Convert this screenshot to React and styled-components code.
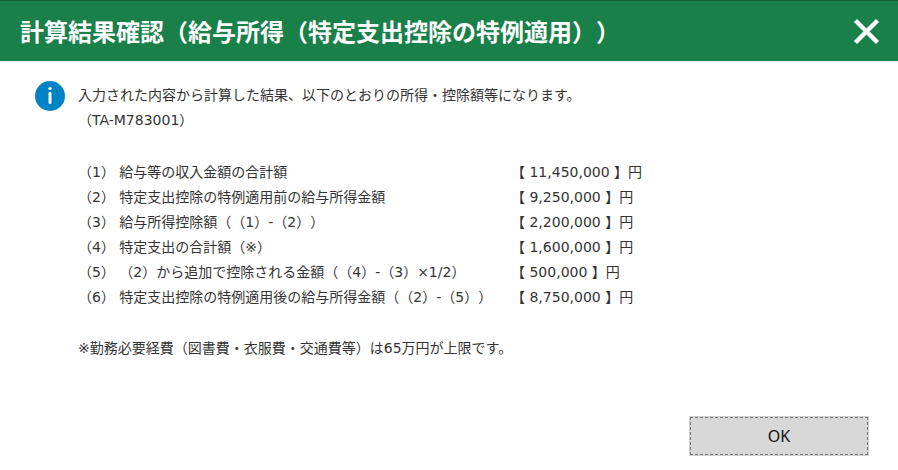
import styled, { createGlobalStyle } from 'styled-components';

const GlobalStyle = createGlobalStyle`
  *,
  *::before,
  *::after {
    box-sizing: border-box;
  }

  body {
    margin: 0;
    background: #ffffff;
    color: #333333;
    font-family: 'DejaVu Sans', 'Noto Sans CJK JP', sans-serif;
    font-size: 14px;
    line-height: 25px;
    text-spacing-trim: space-all;
  }
`;

const StyledHeader = styled.header`
  display: flex;
  align-items: center;
  justify-content: space-between;
  height: 61px;
  padding: 0 18px 0 20px;
  border-top: 1px solid #17603a;
  background: #1a804a;
`;

const StyledHeading = styled.h1`
  margin: 0;
  color: #ffffff;
  font-family: 'Noto Sans CJK JP', sans-serif;
  font-size: 24px;
  font-weight: 700;
  line-height: 36px;
`;

const StyledCloseButton = styled.button`
  display: flex;
  padding: 0;
  border: none;
  background: transparent;
  cursor: pointer;
`;

const StyledContent = styled.main`
  display: flex;
  align-items: flex-start;
  gap: 13px;
  padding: 20px 35px 0;
`;

const StyledIcon = styled.svg`
  flex: none;
  width: 30px;
  height: 30px;
`;

const StyledMessage = styled.div`
  flex: 1;
  padding-top: 2px;
`;

const StyledText = styled.p`
  margin: 0;
`;

const StyledTable = styled.table`
  margin: 27px 0 26px;
  border-collapse: collapse;
`;

const StyledLabel = styled.th`
  width: 433px;
  padding: 0;
  font-weight: 400;
  text-align: left;
`;

const StyledAmount = styled.td`
  padding: 0;
  white-space: nowrap;
`;

const StyledFooter = styled.footer`
  display: flex;
  justify-content: flex-end;
  padding: 55px 29px 14px;
`;

const StyledButton = styled.button`
  width: 180px;
  height: 40px;
  padding: 0;
  border: 1px solid #d0d0d0;
  outline: 1px dashed #777777;
  outline-offset: -2px;
  background: #d8d8d8;
  color: #111111;
  font-family: 'Noto Sans', sans-serif;
  font-size: 16px;
  cursor: pointer;
`;

const results = [
  { label: '（1） 給与等の収入金額の合計額', amount: '11,450,000' },
  { label: '（2） 特定支出控除の特例適用前の給与所得金額', amount: '9,250,000' },
  { label: '（3） 給与所得控除額（（1）-（2））', amount: '2,200,000' },
  { label: '（4） 特定支出の合計額（※）', amount: '1,600,000' },
  { label: '（5） （2）から追加で控除される金額（（4）-（3）×1/2）', amount: '500,000' },
  { label: '（6） 特定支出控除の特例適用後の給与所得金額（（2）-（5））', amount: '8,750,000' },
];

const App = () => (
  <div lang="ja">
    <GlobalStyle />
    <StyledHeader>
      <StyledHeading>計算結果確認（給与所得（特定支出控除の特例適用））</StyledHeading>
      <StyledCloseButton type="button" aria-label="閉じる">
        <svg width="27" height="27" viewBox="0 0 27 27" aria-hidden="true">
          <path d="M2.5 2.5 24.5 24.5M24.5 2.5 2.5 24.5" stroke="#ffffff" strokeWidth="4.5" />
        </svg>
      </StyledCloseButton>
    </StyledHeader>
    <StyledContent>
      <StyledIcon viewBox="0 0 30 30" aria-hidden="true">
        <circle cx="15" cy="15" r="15" fill="#0082c6" />
        <circle cx="15" cy="7.6" r="1.7" fill="#ffffff" />
        <path d="M15 12.3V21.6" stroke="#ffffff" strokeWidth="3" strokeLinecap="round" />
      </StyledIcon>
      <StyledMessage>
        <StyledText>入力された内容から計算した結果、以下のとおりの所得・控除額等になります。</StyledText>
        <StyledText>（TA-M783001）</StyledText>
        <StyledTable>
          <tbody>
            {results.map(({ label, amount }) => (
              <tr key={label}>
                <StyledLabel scope="row">{label}</StyledLabel>
                <StyledAmount>【 {amount} 】円</StyledAmount>
              </tr>
            ))}
          </tbody>
        </StyledTable>
        <StyledText>※勤務必要経費（図書費・衣服費・交通費等）は65万円が上限です。</StyledText>
      </StyledMessage>
    </StyledContent>
    <StyledFooter>
      <StyledButton type="button">OK</StyledButton>
    </StyledFooter>
  </div>
);

export default App;
